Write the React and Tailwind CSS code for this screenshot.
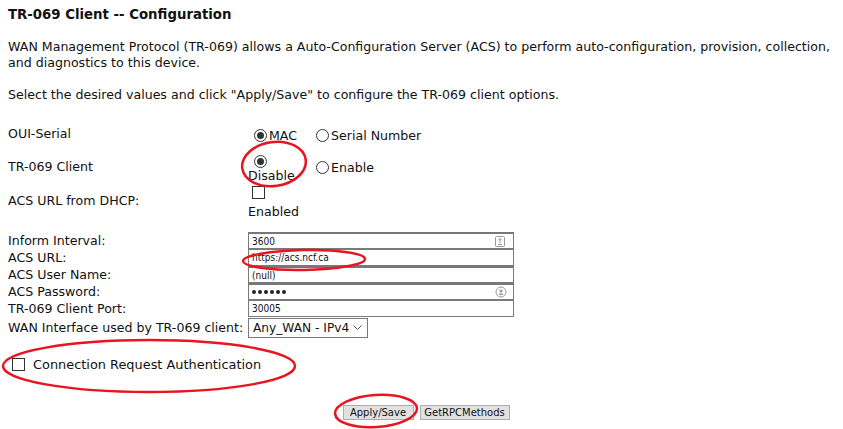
import React from "react";

const font = { fontFamily: '"DejaVu Sans", Verdana, sans-serif' };

const Radio = ({ checked }) => (
  <span className="inline-flex w-[13px] h-[13px] shrink-0 items-center justify-center rounded-full border border-[#333] bg-white">
    {checked && <span className="w-[7px] h-[7px] rounded-full bg-[#333]" />}
  </span>
);

const Box = () => (
  <span className="inline-block w-[13px] h-[13px] shrink-0 border border-[#333] bg-white" />
);

const SpinIcon = () => (
  <svg width="10" height="11" viewBox="0 0 10 11" className="absolute right-[8px] top-[2px]">
    <rect x="0.5" y="0.5" width="9" height="10" rx="1" fill="none" stroke="#999" />
    <path d="M5 2.5 L5 7 M3.5 4 L5 2.5 L6.5 4 M3 8.5 H7" stroke="#999" fill="none" />
  </svg>
);

const KeyIcon = () => (
  <svg width="12" height="12" viewBox="0 0 12 12" className="absolute right-[6px] top-[1px]">
    <circle cx="6" cy="6" r="5" fill="none" stroke="#999" />
    <circle cx="6" cy="5" r="1.6" fill="#999" />
    <path d="M4 7.5 H8 V9 H4 Z" fill="#999" />
  </svg>
);

const Dots = () => (
  <span className="flex gap-[2px]">
    {[0, 1, 2, 3, 4, 5].map((i) => (
      <span key={i} className="w-[4px] h-[4px] rounded-full bg-[#222]" />
    ))}
  </span>
);

const Field = ({ label, value, thick, icon, password }) => (
  <div className="flex h-[17px] items-center">
    <div className="w-[240px] text-[12.6px] leading-[17px]">{label}</div>
    <div
      className={`relative flex h-[17px] w-[266px] items-center border border-[#7a7a7a] bg-white pl-[3px] text-[10px] ${
        thick ? "border-t-2 border-t-[#777]" : ""
      }`}
      style={{ fontFamily: '"DejaVu Sans Condensed", "DejaVu Sans", sans-serif' }}
    >
      {password ? <Dots /> : value}
      {icon === "spin" && <SpinIcon />}
      {icon === "key" && <KeyIcon />}
    </div>
  </div>
);

export default function App() {
  return (
    <div className="relative w-[843px] h-[429px] overflow-hidden bg-white text-[#111]" style={font}>
      <div className="px-2 pt-[7px]">
        <div className="text-[13.3px] font-bold leading-[16px]">TR-069 Client -- Configuration</div>
        <p className="mt-[16px] text-[12.6px] leading-[16px]">
          WAN Management Protocol (TR-069) allows a Auto-Configuration Server (ACS) to perform auto-configuration, provision, collection,
          <br />
          and diagnostics to this device.
        </p>
        <p className="mt-[16px] text-[12.6px] leading-[16px]">
          Select the desired values and click "Apply/Save" to configure the TR-069 client options.
        </p>

        <div className="mt-[21px] text-[12.6px]">
          <div className="flex h-[26px] items-center">
            <div className="w-[240px] -mt-[5px]">OUI-Serial</div>
            <div className="flex items-center w-[68px] pl-[6px] gap-[2px] -mt-[2px]">
              <Radio checked />
              <span>MAC</span>
            </div>
            <div className="flex items-center gap-[2px] -mt-[2px]">
              <Radio />
              <span>Serial Number</span>
            </div>
          </div>

          <div className="flex h-[34px] items-center">
            <div className="w-[240px]">TR-069 Client</div>
            <div className="flex flex-col w-[68px] leading-[15px]">
              <span className="pl-[6px] pt-[1px]"><Radio checked /></span>
              <span>Disable</span>
            </div>
            <div className="flex items-center gap-[2px] mt-[2px]">
              <Radio />
              <span>Enable</span>
            </div>
          </div>

          <div className="flex h-[34px] items-center">
            <div className="w-[240px]">ACS URL from DHCP:</div>
            <div className="flex flex-col leading-[15px] pt-[2px]">
              <span className="pl-[4px]"><Box /></span>
              <span className="mt-[2px]">Enabled</span>
            </div>
          </div>
        </div>

        <div className="mt-[14px]">
          <Field label="Inform Interval:" value="3600" thick icon="spin" />
          <Field label="ACS URL:" value="https://acs.ncf.ca" />
          <Field label="ACS User Name:" value="(null)" thick />
          <Field label="ACS Password:" password thick icon="key" />
          <Field label="TR-069 Client Port:" value="30005" />
          <div className="flex h-[20px] items-center mt-[1px]">
            <div className="w-[240px] text-[12.6px] whitespace-nowrap">WAN Interface used by TR-069 client:</div>
            <div className="flex h-[20px] w-[120px] items-center justify-between whitespace-nowrap border border-[#7a7a7a] bg-white pl-[4px] pr-[5px] text-[12.2px]">
              <span>Any_WAN - IPv4</span>
              <svg width="9" height="6" viewBox="0 0 9 6" className="shrink-0">
                <path d="M0.5 0.5 L4.5 4.5 L8.5 0.5" stroke="#555" fill="none" />
              </svg>
            </div>
          </div>
        </div>

        <div className="mt-[17px] flex items-center gap-[8px] pl-[4px] text-[12.9px]">
          <Box />
          <span>Connection Request Authentication</span>
        </div>

        <div className="mt-[31px] flex justify-center gap-[6px] pl-[9px]">
          <button className="h-[15px] w-[71px] border border-[#adadad] bg-[#e1e1e1] text-[10px] leading-[13px]">
            Apply/Save
          </button>
          <button className="h-[15px] w-[90px] border border-[#adadad] bg-[#e1e1e1] text-[10px] leading-[13px]">
            GetRPCMethods
          </button>
        </div>
      </div>

      <svg className="pointer-events-none absolute inset-0" width="843" height="429">
        <g fill="none" stroke="#e8141f" strokeWidth="2.5">
          <ellipse cx="274" cy="164" rx="32" ry="22" transform="rotate(-8 274 164)" />
          <ellipse cx="304" cy="260" rx="61" ry="10" transform="rotate(-1 304 260)" />
          <ellipse cx="149" cy="366" rx="146" ry="26" />
          <ellipse cx="376" cy="411" rx="41" ry="16" transform="rotate(-4 376 411)" />
        </g>
      </svg>
    </div>
  );
}
